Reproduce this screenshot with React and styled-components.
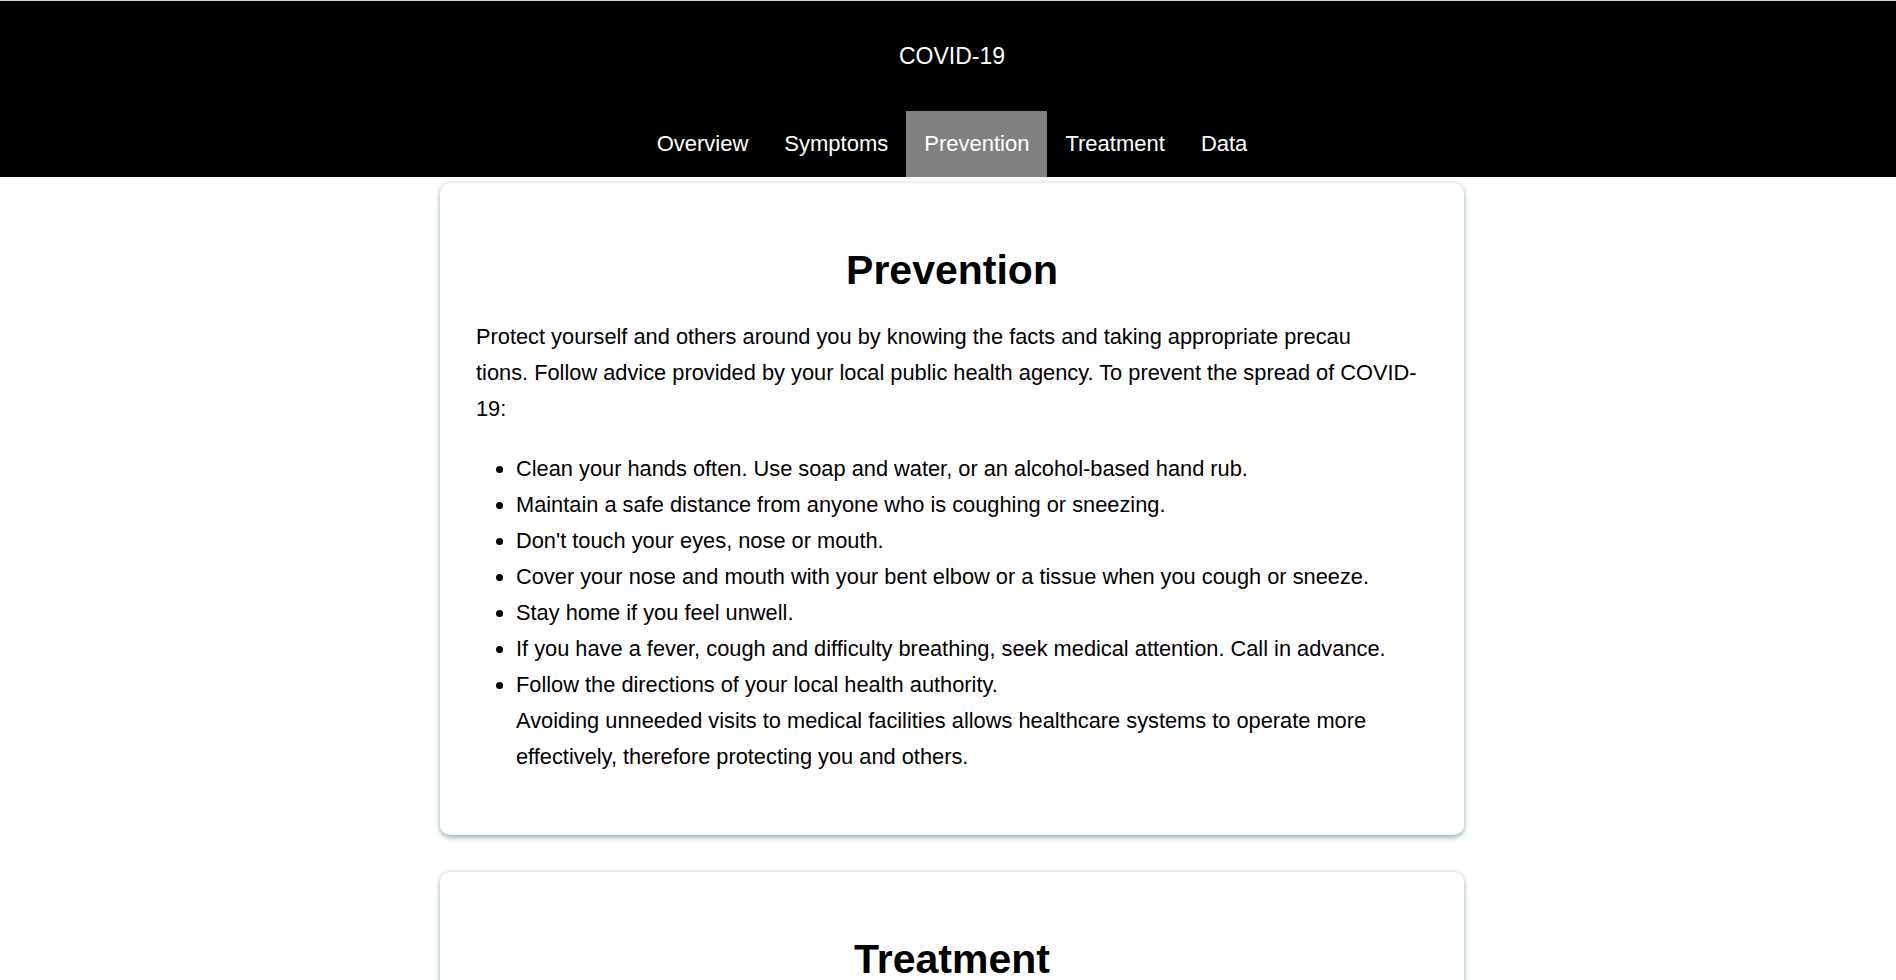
import React from 'react';
import styled, { createGlobalStyle } from 'styled-components';

const GlobalStyle = createGlobalStyle`
  html, body {
    margin: 0;
    padding: 0;
    background: #ffffff;
  }
  body {
    font-family: "Liberation Sans", Arial, sans-serif;
    color: #000000;
  }
`;

const Header = styled.header`
  background: #000000;
  border-top: 1px solid #d4d4d4;
  padding: 35px 0 0 8px;
`;

const Title = styled.h1`
  margin: 0 0 35px;
  font-size: 23px;
  font-weight: normal;
  line-height: 40px;
  text-align: center;
  color: #ffffff;
`;

const Nav = styled.nav`
  display: flex;
  justify-content: center;
`;

const Tab = styled.a`
  display: block;
  height: 66px;
  line-height: 66px;
  padding: 0 18px;
  font-size: 22px;
  color: #ffffff;
  text-decoration: none;
  background: ${(p) => (p.$active ? '#808080' : 'transparent')};
`;

const Main = styled.main`
  display: flex;
  flex-direction: column;
  align-items: center;
  gap: 37px;
  padding: 6px 0 40px 8px;
`;

const Card = styled.section`
  box-sizing: border-box;
  width: 1024px;
  padding: 36px;
  background: #ffffff;
  border-radius: 10px;
  box-shadow: 0 0 4px rgba(130, 170, 185, 0.35), 0 3px 5px rgba(60, 110, 130, 0.45);
`;

const Heading = styled.h2`
  margin: 26px 0 24px;
  font-size: 41px;
  font-weight: bold;
  line-height: 50px;
  text-align: center;
`;

const Text = styled.p`
  margin: 0 0 24px;
  font-size: 21.8px;
  line-height: 36px;
`;

const List = styled.ul`
  margin: 0 0 24px;
  padding-left: 40px;
  font-size: 21.8px;
  line-height: 36px;
`;

const tabs = ['Overview', 'Symptoms', 'Prevention', 'Treatment', 'Data'];

const prevention = [
  'Clean your hands often. Use soap and water, or an alcohol-based hand rub.',
  'Maintain a safe distance from anyone who is coughing or sneezing.',
  "Don't touch your eyes, nose or mouth.",
  'Cover your nose and mouth with your bent elbow or a tissue when you cough or sneeze.',
  'Stay home if you feel unwell.',
  'If you have a fever, cough and difficulty breathing, seek medical attention. Call in advance.',
];

export default function App() {
  return (
    <>
      <GlobalStyle />
      <Header>
        <Title>COVID-19</Title>
        <Nav>
          {tabs.map((t) => (
            <Tab key={t} href={`#${t.toLowerCase()}`} $active={t === 'Prevention'}>
              {t}
            </Tab>
          ))}
        </Nav>
      </Header>
      <Main>
        <Card id="prevention">
          <Heading>Prevention</Heading>
          <Text>
            Protect yourself and others around you by knowing the facts and taking appropriate precau
            <br />
            tions. Follow advice provided by your local public health agency. To prevent the spread of COVID-19:
          </Text>
          <List>
            {prevention.map((item) => (
              <li key={item}>{item}</li>
            ))}
            <li>
              Follow the directions of your local health authority.
              <br />
              Avoiding unneeded visits to medical facilities allows healthcare systems to operate more
              effectively, therefore protecting you and others.
            </li>
          </List>
        </Card>
        <Card id="treatment">
          <Heading>Treatment</Heading>
          <Text>
            To date, there are no specific vaccines or medicines for COVID-19. Treatments are under
            investigation, and will be tested through clinical trials.
          </Text>
        </Card>
      </Main>
    </>
  );
}
